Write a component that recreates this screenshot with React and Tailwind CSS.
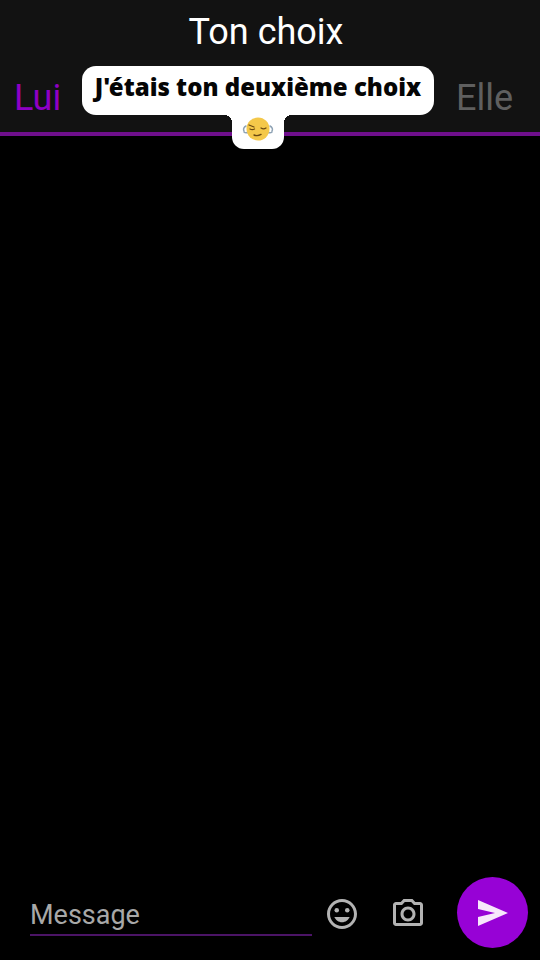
function SleepyEmoji() {
  return (
    <svg width="32" height="28" viewBox="0 0 32 28">
      <path d="M4 11c-2 1-3 3-2 5M2 17c1 1 3 1 5 0M28 11c2 1 3 3 2 5M30 17c-1 1-3 1-5 0" fill="none" stroke="#8fa3b5" strokeWidth="1.5" strokeLinecap="round" />
      <circle cx="16" cy="14" r="11.5" fill="#f4c84a" />
      <path d="M7 10l5 2M8 14c1.500 .8 3 .8 4.500 0M19 13c1.500 1 3.500 1 5 0" fill="none" stroke="#6b4a12" strokeWidth="1.300" strokeLinecap="round" />
      <path d="M12 20c2 .8 5 .6 7-.6" fill="none" stroke="#6b4a12" strokeWidth="1.400" strokeLinecap="round" />
    </svg>
  );
}

function SmileIcon() {
  return (
    <svg width="36" height="36" viewBox="0 0 24 24" fill="#b3b3b3">
      <path d="M12 2C6.470 2 2 6.500 2 12s4.470 10 10 10 10-4.500 10-10S17.520 2 12 2zm0 18c-4.420 0-8-3.580-8-8s3.580-8 8-8 8 3.580 8 8-3.580 8-8 8z" />
      <circle cx="8.500" cy="9.500" r="1.500" />
      <circle cx="15.500" cy="9.500" r="1.500" />
      <path d="M12 17.500c2.330 0 4.300-1.460 5.110-3.500H6.890c.8 2.040 2.780 3.500 5.110 3.500z" />
    </svg>
  );
}

function CameraIcon() {
  return (
    <svg width="36" height="36" viewBox="0 0 24 24" fill="#b3b3b3">
      <path d="M20 4h-3.170L15 2H9L7.170 4H4c-1.100 0-2 .9-2 2v12c0 1.100.9 2 2 2h16c1.100 0 2-.9 2-2V6c0-1.100-.9-2-2-2zm0 14H4V6h4.050l1.830-2h4.240l1.830 2H20v12zM12 7c-2.760 0-5 2.240-5 5s2.240 5 5 5 5-2.240 5-5-2.240-5-5-5zm0 8c-1.650 0-3-1.350-3-3s1.350-3 3-3 3 1.350 3 3-1.350 3-3 3z" />
    </svg>
  );
}

export default function App() {
  return (
    <div className="relative flex h-[960px] w-[540px] flex-col overflow-hidden bg-black font-['Roboto',sans-serif]">
      <header className="h-[136px] border-b-[4px] border-[#6f0f8c] bg-[#121212]">
        <h1 className="pt-[12px] text-center text-[36px] leading-[40px] text-white [text-indent:-8px]">Ton choix</h1>
        <div className="mt-[26px] flex justify-between pr-[27px] pl-[14px] text-[36px] leading-[40px]">
          <span className="text-[#8f00c4]">Lui</span>
          <span className="text-[#5f5f5f]">Elle</span>
        </div>
      </header>

      <main className="flex-1" />

      <footer className="flex h-[83px] items-start pr-[12px] pl-[30px]">
        <div className="mt-[19px] h-[40px] w-[282px] border-b-[2px] border-[#4b1466] text-[27px] leading-[38px] text-[#a8a8a8]">Message</div>
        <div className="mt-[19px] ml-[12px]"><SmileIcon /></div>
        <div className="mt-[19px] ml-[30px]"><CameraIcon /></div>
        <button className="ml-[31px] flex h-[71px] w-[71px] items-center justify-center rounded-full bg-[#9702d6]">
          <svg width="32" height="28" viewBox="0 0 32 28" fill="#f7e8fb">
            <path d="M1 1l30 13L1 27v-9l17-4L1 10z" />
          </svg>
        </button>
      </footer>

      <div className="absolute top-[66px] left-[82px] flex flex-col items-center">
        <div className="flex h-[49px] w-[352px] items-start justify-center rounded-[14px] bg-white pt-[5px] font-['Noto_Sans',sans-serif] text-[24px] leading-[32px] font-black whitespace-nowrap text-[#050505]">J'étais ton deuxième choix</div>
        <div className="relative flex h-[34px] w-[52px] justify-center rounded-b-[12px] bg-white">
          <span className="absolute top-0 left-[-8px] h-[8px] w-[8px] bg-[radial-gradient(circle_at_0_100%,transparent_8px,white_8px)]" />
          <span className="absolute top-0 right-[-8px] h-[8px] w-[8px] bg-[radial-gradient(circle_at_100%_100%,transparent_8px,white_8px)]" />
          <SleepyEmoji />
        </div>
      </div>
    </div>
  );
}
